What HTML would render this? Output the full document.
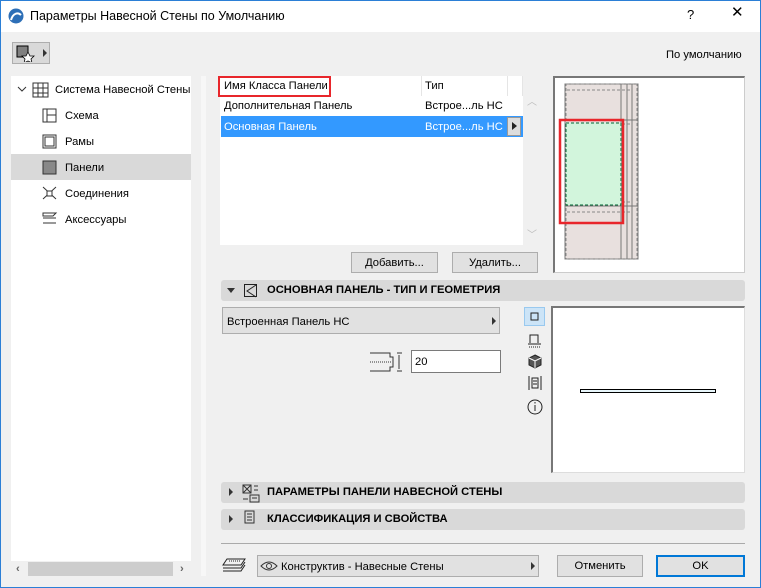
<!DOCTYPE html>
<html><head><meta charset="utf-8"><style>
*{box-sizing:border-box;margin:0;padding:0}
body{width:761px;height:588px;overflow:hidden;background:#f0f0f0;font-family:"Liberation Sans",sans-serif;font-size:11.2px;line-height:14px;color:#000;position:relative}
.a{position:absolute}
.win{left:0;top:0;width:761px;height:588px;border:1px solid #2b7fd6}
.btn{position:absolute;background:#e1e1e1;border:1px solid #adadad;text-align:center;line-height:20px}
.hdr{position:absolute;left:221px;width:524px;height:21px;background:#d9d9d9;border-radius:3px;font-weight:bold;font-size:11.2px;line-height:21px}
.tri{position:absolute;width:0;height:0}
</style></head><body>
<div class="a win"></div>
<div class="a" style="left:1px;top:1px;width:759px;height:31px;background:#fff"></div>
<svg class="a" style="left:8px;top:8px" width="16" height="16"><circle cx="8" cy="8" r="7.5" fill="#2d6fb7"/><path d="M3 12 C5 5 10 4 13 7" stroke="#fff" stroke-width="2" fill="none"/></svg>
<div class="a" style="left:30px;top:9px;font-size:12.5px;line-height:15px">Параметры Навесной Стены по Умолчанию</div>
<div class="a" style="left:687px;top:8px;font-size:13px">?</div>
<div class="a" style="left:731px;top:6px;font-size:15px">✕</div>
<div class="a" style="left:12px;top:42px;width:38px;height:22px;background:#d9d9d9;border:1px solid #adadad"></div>
<svg class="a" style="left:15px;top:44px" width="34" height="18"><rect x="2" y="2" width="11" height="11" fill="#808080" stroke="#000"/><path d="M13 8 l2 4 4 0 -3 3 1 4 -4-2 -4 2 1-4 -3-3 4 0z" fill="#fff" stroke="#000" stroke-width=".8"/><path d="M28 5 l4 4 -4 4z" fill="#333"/></svg>
<div class="a" style="left:666px;top:48px">По умолчанию</div>
<div class="a" style="left:11px;top:76px;width:180px;height:485px;background:#fff"></div>
<div class="a" style="left:11px;top:561px;width:180px;height:16px;background:#f0f0f0"></div>
<div class="a" style="left:28px;top:562px;width:145px;height:14px;background:#cdcdcd"></div>
<div class="a" style="left:16px;top:562px;color:#666;font-weight:bold">‹</div>
<div class="a" style="left:180px;top:562px;color:#666;font-weight:bold">›</div>
<div class="a" style="left:201px;top:76px;width:5px;height:500px;background:#f7f7f7"></div>
<div class="a" style="left:11px;top:154px;width:180px;height:26px;background:#d9d9d9"></div>
<svg class="a" style="left:16px;top:82px" width="180" height="150" fill="none" stroke="#333">
<path d="M2 5 l4 4 4-4"/>
<rect x="17" y="1" width="15" height="14"/><path d="M17 6h15M17 11h15M22 1v14M27 1v14"/>
<rect x="27" y="27" width="13" height="13"/><path d="M31 27v13M31 33h9"/>
<rect x="27" y="53" width="13" height="13"/><rect x="29" y="55" width="9" height="9"/>
<rect x="27" y="79" width="13" height="13" fill="#888"/>
<path d="M27 105l13 12M40 105l-13 12"/><rect x="31" y="109" width="5" height="5" fill="#fff"/>
<path d="M27 131h13l-3 3h-10zM27 136h13M27 141h13"/>
</svg>
<div class="a" style="left:55px;top:83px">Система Навесной Стены</div>
<div class="a" style="left:65px;top:109px">Схема</div>
<div class="a" style="left:65px;top:135px">Рамы</div>
<div class="a" style="left:65px;top:161px">Панели</div>
<div class="a" style="left:65px;top:187px">Соединения</div>
<div class="a" style="left:65px;top:213px">Аксессуары</div>
<div class="a" style="left:220px;top:76px;width:303px;height:169px;background:#fff"></div>
<div class="a" style="left:421px;top:76px;width:1px;height:20px;background:#e5e5e5"></div>
<div class="a" style="left:507px;top:76px;width:1px;height:20px;background:#e5e5e5"></div>
<div class="a" style="left:522px;top:76px;width:1px;height:20px;background:#e5e5e5"></div>
<div class="a" style="left:218px;top:76px;width:113px;height:21px;border:2px solid #e8262b"></div>
<div class="a" style="left:224px;top:79px">Имя Класса Панели</div>
<div class="a" style="left:425px;top:79px">Тип</div>
<div class="a" style="left:224px;top:99px">Дополнительная Панель</div>
<div class="a" style="left:425px;top:99px">Встрое...ль НС</div>
<div class="a" style="left:221px;top:116px;width:302px;height:21px;background:#3399ff"></div>
<div class="a" style="left:224px;top:120px;color:#fff">Основная Панель</div>
<div class="a" style="left:425px;top:120px;color:#fff">Встрое...ль НС</div>
<div class="a" style="left:507px;top:117px;width:14px;height:19px;background:#ddd;border:1px solid #999"></div>
<div class="tri" style="left:512px;top:122px;border-left:5px solid #222;border-top:4px solid transparent;border-bottom:4px solid transparent"></div>
<div class="a" style="left:527px;top:96px;color:#bbb;font-size:10px">︿</div>
<div class="a" style="left:527px;top:229px;color:#bbb;font-size:10px">﹀</div>
<div class="btn" style="left:351px;top:252px;width:87px;height:21px">Добавить...</div>
<div class="btn" style="left:452px;top:252px;width:86px;height:21px">Удалить...</div>
<div class="a" style="left:553px;top:76px;width:192px;height:197px;background:#fff;border:1px solid #ccc;border-top:2px solid #777;border-left:2px solid #777"></div>
<svg class="a" style="left:553px;top:76px" width="192" height="197">
<rect x="12" y="8" width="73" height="175" fill="#e8e0de" stroke="#777"/>
<rect x="13" y="8" width="71" height="175" fill="none" stroke="#888" stroke-dasharray="3,2"/>
<path d="M12 44h73M12 130h73M68 8v175M79 8v175M74 8v175" stroke="#777"/>
<path d="M14 14h65M14 48h65M14 126h65M14 136h65" stroke="#888" stroke-dasharray="3,2"/>
<rect x="13" y="47" width="55" height="82" fill="#d2f5dc" stroke="#063" stroke-dasharray="3,2"/>
<rect x="8" y="45" width="63" height="103" fill="none" stroke="#e8262b" stroke-width="2.5" transform="translate(-1,-1)"/>
</svg>
<div class="hdr" style="top:280px"><span style="position:absolute;left:46px">ОСНОВНАЯ ПАНЕЛЬ - ТИП И ГЕОМЕТРИЯ</span></div>
<div class="tri" style="left:227px;top:288px;border-top:5px solid #333;border-left:4px solid transparent;border-right:4px solid transparent"></div>
<svg class="a" style="left:243px;top:283px" width="16" height="16" fill="none" stroke="#222"><rect x="1.5" y="1.5" width="12" height="12"/><path d="M13 2L4 8l9 6"/></svg>
<div class="a" style="left:222px;top:307px;width:278px;height:27px;background:#e1e1e1;border:1px solid #adadad"></div>
<div class="a" style="left:227px;top:315px">Встроенная Панель НС</div>
<div class="tri" style="left:492px;top:317px;border-left:4px solid #333;border-top:4px solid transparent;border-bottom:4px solid transparent"></div>
<svg class="a" style="left:369px;top:350px" width="36" height="24" fill="none" stroke="#333"><path d="M1 3h20v4h3v10h-3v4H1" /><path d="M1 12h22" stroke-dasharray="1,1"/><path d="M28 3h5M28 21h5M30 5v14" /></svg>
<div class="a" style="left:411px;top:350px;width:90px;height:23px;background:#fff;border:1px solid #7a7a7a"></div>
<div class="a" style="left:415px;top:355px">20</div>
<div class="a" style="left:524px;top:307px;width:21px;height:19px;background:#cce4f7;border:1px solid #99c9ef"></div>
<svg class="a" style="left:524px;top:307px" width="22" height="110" fill="none" stroke="#222">
<rect x="7" y="6" width="7" height="7"/>
<path d="M6 36v-8h8v8M4 37h13" /><path d="M5 40h12" stroke-dasharray="1,1"/>
<path d="M11 48l6 3v7l-6 3-6-3v-7z" fill="#555"/><path d="M5 51l6 3 6-3M11 54v7" stroke="#fff"/>
<path d="M5 69v14M17 69v14M8 71h6v10h-6z"/><path d="M9 74h4M9 77h4"/>
<circle cx="11" cy="100" r="7"/><path d="M11 98v6M11 95v1.5"/>
</svg>
<div class="a" style="left:551px;top:306px;width:194px;height:167px;background:#fff;border:1px solid #ddd;border-top:2px solid #777;border-left:2px solid #777"></div>
<div class="a" style="left:580px;top:389px;width:136px;height:4px;border:1px solid #000;background:#e8f6fb"></div>
<div class="hdr" style="top:482px"><span style="position:absolute;left:46px">ПАРАМЕТРЫ ПАНЕЛИ НАВЕСНОЙ СТЕНЫ</span></div>
<div class="hdr" style="top:509px"><span style="position:absolute;left:46px">КЛАССИФИКАЦИЯ И СВОЙСТВА</span></div>
<div class="tri" style="left:229px;top:488px;border-left:4px solid #333;border-top:4px solid transparent;border-bottom:4px solid transparent"></div>
<div class="tri" style="left:229px;top:515px;border-left:4px solid #333;border-top:4px solid transparent;border-bottom:4px solid transparent"></div>
<svg class="a" style="left:241px;top:483px" width="20" height="44" fill="none" stroke="#333">
<rect x="2" y="2" width="8" height="8"/><path d="M2 2l8 8M10 2l-8 8M13 3h4M13 7h4M9 12h9v7h-9zM11 15h5M2 16h5"/>
<rect x="4" y="28" width="9" height="12"/><path d="M6 31h5M6 34h5M6 37h5"/>
</svg>
<div class="a" style="left:221px;top:543px;width:524px;height:1px;background:#aaa"></div>
<svg class="a" style="left:221px;top:557px" width="26" height="18" fill="none" stroke="#222"><path d="M6 2h18l-4 6H2zM2 11h18l4-6M2 14h18l4-6"/><path d="M8 4h12" stroke-dasharray="1,1"/></svg>
<div class="a" style="left:257px;top:555px;width:282px;height:22px;background:#e1e1e1;border:1px solid #adadad"></div>
<svg class="a" style="left:260px;top:560px" width="18" height="12" fill="none" stroke="#333"><path d="M1 6q8-8 16 0q-8 8-16 0z"/><circle cx="9" cy="6" r="2.5"/></svg>
<div class="a" style="left:281px;top:560px">Конструктив - Навесные Стены</div>
<div class="tri" style="left:531px;top:562px;border-left:4px solid #333;border-top:4px solid transparent;border-bottom:4px solid transparent"></div>
<div class="btn" style="left:557px;top:555px;width:86px;height:22px">Отменить</div>
<div class="btn" style="left:656px;top:555px;width:89px;height:22px;border:2px solid #0078d7;line-height:18px">OK</div>
</body></html>
